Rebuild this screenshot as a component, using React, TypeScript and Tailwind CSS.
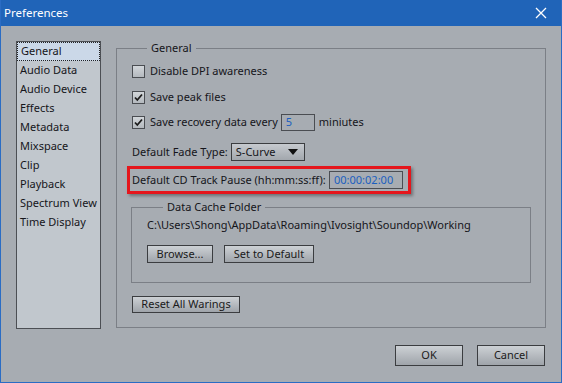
import React from 'react'

const font = { fontFamily: '"Noto Sans", "Open Sans", sans-serif' }

const items = ['General', 'Audio Data', 'Audio Device', 'Effects', 'Metadata', 'Mixspace', 'Clip', 'Playback', 'Spectrum View', 'Time Display']

const Checkbox = ({ checked }: { checked?: boolean }) => (
  <span className="w-[13px] h-[13px] border border-[#4a4d52] bg-gradient-to-b from-[#d2d6da] to-[#b4b9be] flex items-center justify-center shrink-0">
    {checked && (
      <svg width="11" height="11" viewBox="0 0 11 11">
        <path d="M2 5.5 L4.3 8 L9 2.5" fill="none" stroke="#1c1c1c" strokeWidth="1.8" />
      </svg>
    )}
  </span>
)

const Button = ({ label, className }: { label: string; className: string }) => (
  <button className={`border border-[#3b3d40] bg-gradient-to-b from-[#cdd1d5] to-[#9fa4aa] text-[#1b1b1b] flex items-center justify-center whitespace-nowrap ${className}`}>
    {label}
  </button>
)

export default function App() {
  return (
    <div style={font} className="w-[562px] h-[383px] bg-[#a7acb2] border border-t-0 border-[#2a6cc4] flex flex-col text-[11px] text-[#15151a] overflow-hidden whitespace-nowrap">
      {/* title bar */}
      <div className="h-[26px] bg-[#2064b8] flex items-center justify-between pl-[3px] pr-[14px] shrink-0">
        <span className="text-white text-[11.5px]">Preferences</span>
        <svg width="12" height="12" viewBox="0 0 12 12">
          <path d="M1 1 L11 11 M11 1 L1 11" stroke="#fff" strokeWidth="1.3" />
        </svg>
      </div>

      <div className="flex pl-[15px] pt-[15px]">
        {/* category list */}
        <div className="w-[85px] h-[288px] bg-[#c1c7cd] border border-[#4c4f54] flex flex-col">
          {items.map((it, i) => (
            <div
              key={it}
              className={`h-[19px] flex items-center pl-[3px] ${i === 0 ? 'bg-[#cbd8e8] border border-dotted border-[#222] pl-[2px]' : ''}`}
            >
              {it}
            </div>
          ))}
        </div>

        {/* general group */}
        <fieldset className="ml-[15px] mt-[-1px] w-[430px] h-[288px] border border-[#7b7f86] pl-[15px] flex flex-col">
          <legend className="ml-[15px] px-[4px] leading-[16px]">General</legend>

          <div className="h-[20px] mt-[5px] flex items-center gap-[5px]">
            <Checkbox />
            <span>Disable DPI awareness</span>
          </div>
          <div className="h-[20px] mt-[6px] flex items-center gap-[5px]">
            <Checkbox checked />
            <span>Save peak files</span>
          </div>
          <div className="h-[20px] mt-[5px] flex items-center gap-[5px]">
            <Checkbox checked />
            <span>Save recovery data every</span>
            <span className="ml-[-2px] w-[34px] h-[17px] border border-[#4a4d52] text-[#1a5fc0] pl-[4px] flex items-center">5</span>
            <span className="ml-[-1px]">miniutes</span>
          </div>
          <div className="h-[20px] mt-[10px] flex items-center">
            <span>Default Fade Type:</span>
            <div className="ml-[3px] w-[74px] h-[18px] border border-[#3b3d40] bg-gradient-to-b from-[#c6cacf] to-[#a2a7ad] flex items-center justify-between pl-[4px] pr-[6px]">
              <span>S-Curve</span>
              <svg width="10" height="7" viewBox="0 0 10 7">
                <path d="M0 0 L10 0 L5 6 Z" fill="#111" />
              </svg>
            </div>
          </div>

          <div className="mt-[4px] ml-[-5px] w-[284px] h-[28px] border-[3px] border-[#e5161c] shadow-[2px_2px_3px_rgba(0,0,0,0.35)] flex items-center pl-[2px]">
            <span>Default CD Track Pause (hh:mm:ss:ff):</span>
            <span className="ml-auto mr-[5px] w-[74px] h-[18px] border border-[#4a4d52] text-[#1a5fc0] flex items-center pl-[4px]">00:00:02:00</span>
          </div>

          <fieldset className="mt-[5px] ml-[-1px] w-[400px] h-[84px] border border-[#7b7f86] pl-[15px] flex flex-col">
            <legend className="ml-[16px] px-[4px] leading-[16px]">Data Cache Folder</legend>
            <div className="h-[18px] mt-[1px] flex items-center">C:\Users\Shong\AppData\Roaming\Ivosight\Soundop\Working</div>
            <div className="mt-[11px] flex gap-[11px]">
              <Button label="Browse..." className="w-[66px] h-[18px]" />
              <Button label="Set to Default" className="w-[90px] h-[18px]" />
            </div>
          </fieldset>

          <Button label="Reset All Warings" className="mt-[13px] w-[108px] h-[17px]" />
        </fieldset>
      </div>

      <div className="flex justify-end gap-[14px] pr-[16px] mt-[16px]">
        <Button label="OK" className="w-[68px] h-[21px]" />
        <Button label="Cancel" className="w-[68px] h-[21px]" />
      </div>
    </div>
  )
}
